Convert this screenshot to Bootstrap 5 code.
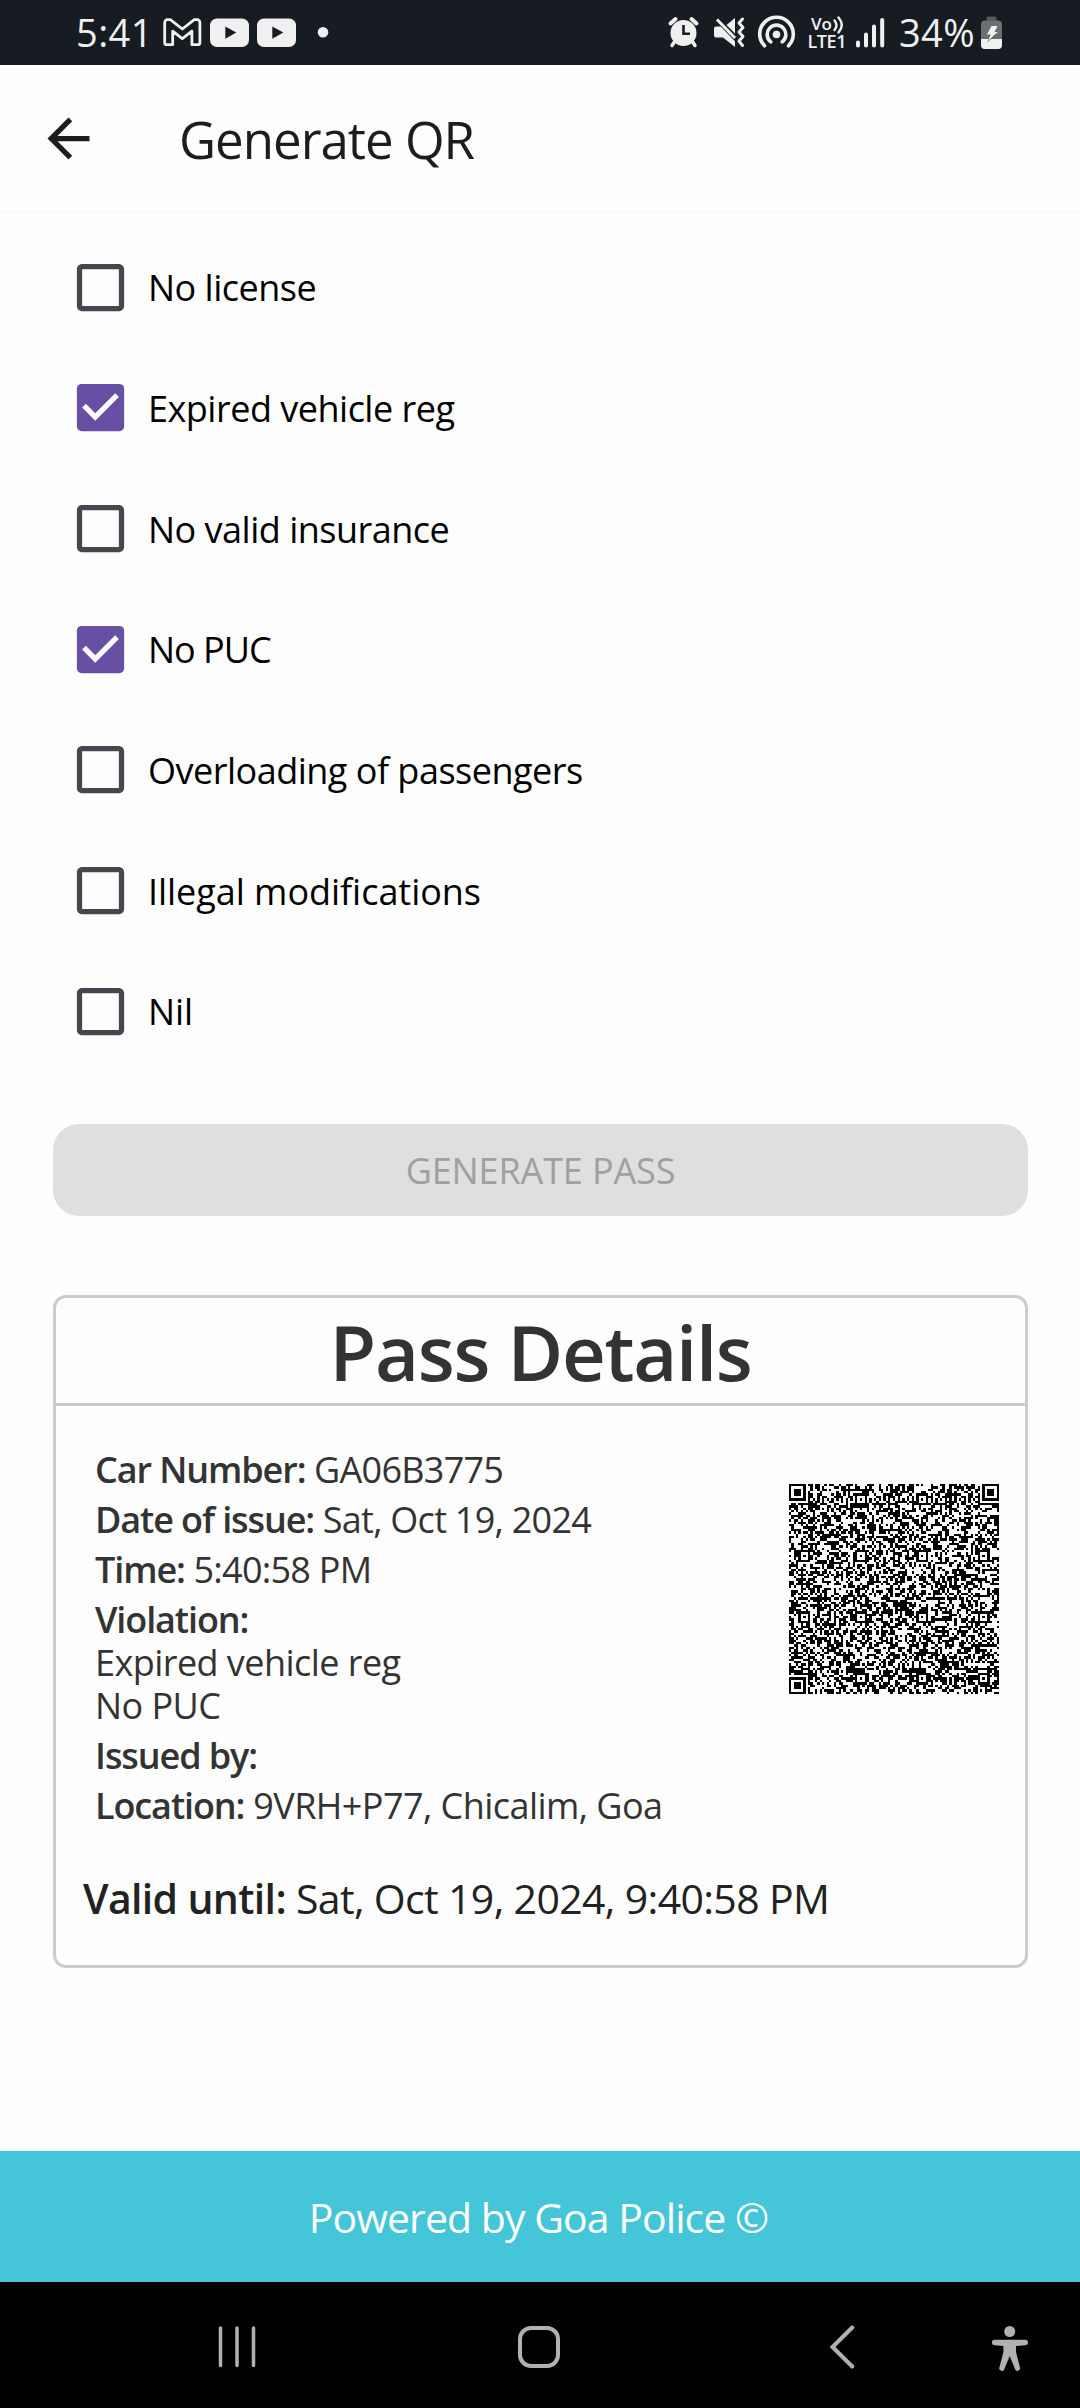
<!DOCTYPE html>
<html lang="en">
<head>
<meta charset="utf-8">
<meta name="viewport" content="width=device-width, initial-scale=1">
<title>Generate QR</title>
<link href="https://cdn.jsdelivr.net/npm/bootstrap@5.3.0/dist/css/bootstrap.min.css" rel="stylesheet">
<style>
  body { font-family: "Open Sans", "Noto Sans", sans-serif; background: #fefefe; color: #000; min-height: 2408px; }
  svg { display: block; flex: none; }
  .status-bar { height: 65px; background: #171b22; color: #f0f0f0; padding: 0 77px 0 76px; }
  .status-text { font-size: 38px; line-height: 65px; letter-spacing: .4px; }
  .status-clock { width: 70px; white-space: nowrap; }
  .status-level { margin-right: 3px; }
  .status-icons { height: 65px; }
  .app-bar { height: 148px; padding-left: 37px; border-bottom: 2px solid #fafafa; }
  .app-title { font-size: 51px; line-height: 60px; letter-spacing: -1px; color: #1d1d1f; margin: 1px 0 0 79px; font-weight: 400; }
  .checks { padding: 14px 0 0 69px; }
  .check-row { height: 120.67px; font-size: 36px; letter-spacing: -.5px; gap: 16px; }
  .check-row span { padding-top: 2px; }
  .check-row.wide { letter-spacing: -.04px; }
  .check-row.caps { letter-spacing: -1px; }
  .content-area { padding: 52px 52px 0 53px; }
  .btn-pass, .btn-pass:disabled { height: 92px; border: 0; border-radius: 26px; background: #dfdfdf; color: #a0a0a0; font-size: 36px; letter-spacing: -.13px; padding-top: 8px; opacity: 1; }
  .pass-card { margin-top: 79px; height: 673px; border: 3px solid #ccc; border-radius: 13px; background: #fefefe; color: #333; }
  .pass-head { height: 108px; border-bottom: 3px solid #ccc; background: none; padding: 0; }
  .pass-title { font-size: 76px; line-height: 107px; font-weight: 600; letter-spacing: -1.3px; margin: 0; }
  .pass-body { padding: 42px 26px 0 39px; }
  .fields { font-size: 36px; line-height: 43px; letter-spacing: -.73px; }
  .fields > div { margin-bottom: 7px; }
  .fields b, .valid b { font-weight: 600; }
  .fields b { letter-spacing: -1.1px; }
  .fields .reasons { letter-spacing: -.55px; }
  .qr { margin-top: 36px; }
  .valid { padding-left: 27px; margin-top: 36px; font-size: 41px; line-height: 56px; letter-spacing: -.65px; color: #222; }
  .powered { height: 131px; background: #44c5d8; color: #fff; font-size: 41px; letter-spacing: -.95px; padding: 2px 3px 0 0; }
  .nav-keys { height: 126px; background: #000; padding: 3px 0 0 217px; }
</style>
<script src="https://cdn.jsdelivr.net/npm/bootstrap@5.3.0/dist/js/bootstrap.bundle.min.js"></script>
</head>
<body class="d-flex flex-column">

<header class="status-bar d-flex justify-content-between">
  <div class="d-flex align-items-center">
    <span class="status-text status-clock">5:41</span>
    <svg class="status-icons" width="190" height="65" viewBox="146 0 190 65">
      <path d="M166.500 19.600h3.800l12 9.400 12-9.400h3.800q1.800 1 1.800 3v20.100q0 2-2 2h-6v-13.500l-9.600 7.400-9.600-7.400v13.500h-6q-2 0-2-2v-20.100q0-2 1.800-3z" fill="none" stroke="#f0f0f0" stroke-width="2.800" stroke-linejoin="round"/>
      <rect x="210" y="18.500" width="39" height="28.500" rx="7" fill="#f0f0f0"/><path d="M225.300 26.500v12.200l11-6.100z" fill="#171b22"/>
      <rect x="257" y="18.500" width="39" height="28.500" rx="7" fill="#f0f0f0"/><path d="M272.300 26.500v12.200l11-6.100z" fill="#171b22"/>
      <circle cx="323" cy="32.300" r="5.300" fill="#f0f0f0"/>
    </svg>
  </div>
  <div class="d-flex align-items-center">
    <svg class="status-icons" width="232" height="65" viewBox="668 0 232 65" fill="none" stroke="#f0f0f0">
      <circle cx="684.500" cy="33" r="13" fill="#f0f0f0" stroke="none"/>
      <path d="M671.500 23.500l5-4.500M697.500 23.500l-5-4.500" stroke-width="4" stroke-linecap="round"/>
      <path d="M676 41l-3 4.500M693 41l3 4.500" stroke-width="3.500" stroke-linecap="round"/>
      <path d="M684.500 25v8.800h6.500" stroke="#171b22" stroke-width="2.600"/>
      <path d="M717 26.500h6.500l12.500 12.500v8l-12-9.500h-7q-2 0-2-2v-7q0-2 2-2zM736 18v15.500l-8.500-8.500z" fill="#f0f0f0" stroke="none"/>
      <path d="M717 20l22 23" stroke="#171b22" stroke-width="2"/><path d="M718 19.500l18 18.500" stroke-width="3"/>
      <path d="M743.500 19l-3.500 4 4 4.500-4 4.500 4 4.500-4 4.500 3.500 4.500" stroke-width="3" stroke-linejoin="round" stroke-linecap="round"/>
      <circle cx="777.500" cy="34.500" r="3.800" fill="#f0f0f0" stroke="none"/>
      <path d="M771.800 41.800a9.300 9.300 0 1 1 11.400 0M765.500 45.800a16.800 16.800 0 1 1 24 0" stroke-width="3.600" stroke-linecap="round"/>
      <text x="812" y="29.500" font-size="17" font-weight="600" fill="#f0f0f0" stroke="none" textLength="21">Vo</text>
      <text x="808.500" y="47.500" font-size="18" font-weight="600" fill="#f0f0f0" stroke="none" textLength="39">LTE1</text>
      <path d="M835.500 20.500q4 4.500 0 9.500M839.500 17.500q6.500 7.500 0 15" stroke-width="2.400" stroke-linecap="round"/>
      <path d="M859 42.500v3M867 34.500v11M875 26.500v19M883.200 20v25.500" stroke-width="4" stroke-linecap="round"/>
    </svg>
    <span class="status-text status-level">34%</span>
    <svg class="status-icons" width="25" height="65" viewBox="979 0 25 65">
      <path d="M987.500 22v-4q0-1.500 1.500-1.500h7q1.500 0 1.500 1.500v4z" fill="#55585d"/>
      <rect x="982" y="20.500" width="21" height="28.500" rx="4" fill="#6c6f73"/>
      <path d="M982 39h21v6q0 4-4 4h-13q-4 0-4-4z" fill="#f0f0f0"/>
      <path d="M996.500 34h-5.500l-2.500 8 9-8z" fill="#171b22"/>
      <path d="M992.500 26h6l-3 6h3.500l-10.500 9.500 3-7h-3.500z" fill="#f0f0f0"/>
    </svg>
  </div>
</header>

<nav class="app-bar d-flex align-items-center">
  <svg width="63" height="63" viewBox="0 0 24 24" fill="#1d1d1f"><path d="M20 11H7.830l5.590-5.590L12 4l-8 8 8 8 1.410-1.410L7.830 13H20z"/></svg>
  <h1 class="app-title">Generate QR</h1>
</nav>

<svg width="0" height="0" class="position-absolute">
  <symbol id="off" viewBox="0 0 24 24"><path fill="#49454f" d="M19 5v14H5V5h14m0-2H5c-1.100 0-2 .9-2 2v14c0 1.100.9 2 2 2h14c1.100 0 2-.9 2-2V5c0-1.100-.9-2-2-2z"/></symbol>
  <symbol id="on" viewBox="0 0 24 24"><rect x="3" y="3" width="18" height="18" rx="1.800" fill="#6750a4"/><path fill="#fff" d="M10 17l-5-5 1.410-1.410L10 14.170l7.590-7.590L19 8z"/></symbol>
</svg>

<section class="checks">
  <div class="check-row d-flex align-items-center"><svg width="63" height="63"><use href="#off"/></svg><span>No license</span></div>
  <div class="check-row d-flex align-items-center"><svg width="63" height="63"><use href="#on"/></svg><span>Expired vehicle reg</span></div>
  <div class="check-row d-flex align-items-center"><svg width="63" height="63"><use href="#off"/></svg><span>No valid insurance</span></div>
  <div class="check-row caps d-flex align-items-center"><svg width="63" height="63"><use href="#on"/></svg><span>No PUC</span></div>
  <div class="check-row d-flex align-items-center"><svg width="63" height="63"><use href="#off"/></svg><span>Overloading of passengers</span></div>
  <div class="check-row wide d-flex align-items-center"><svg width="63" height="63"><use href="#off"/></svg><span>Illegal modifications</span></div>
  <div class="check-row wide d-flex align-items-center"><svg width="63" height="63"><use href="#off"/></svg><span>Nil</span></div>
</section>

<main class="content-area flex-grow-1">
  <button class="btn btn-pass w-100" disabled>GENERATE PASS</button>
  <div class="card pass-card">
    <div class="card-header pass-head text-center"><h2 class="pass-title">Pass Details</h2></div>
    <div class="pass-body d-flex justify-content-between align-items-start">
      <div class="fields">
        <div><b>Car Number:</b> GA06B3775</div>
        <div><b>Date of issue:</b> Sat, Oct 19, 2024</div>
        <div><b>Time:</b> 5:40:58 PM</div>
        <div class="reasons"><b>Violation:</b><br>Expired vehicle reg<br>No PUC</div>
        <div><b>Issued by:</b></div>
        <div class="reasons"><b>Location:</b> 9VRH+P77, Chicalim, Goa</div>
      </div>
      <svg class="qr" width="210" height="210" viewBox="0 0 89 89" shape-rendering="crispEdges"><path id="qr" fill="#000"/></svg>
    </div>
    <div class="valid"><b>Valid until:</b> Sat, Oct 19, 2024, 9:40:58 PM</div>
  </div>
</main>

<footer class="powered d-flex align-items-center justify-content-center">Powered by Goa Police ©</footer>
<div class="nav-keys">
  <svg width="820" height="120" viewBox="217 2285 820 120" fill="none" stroke="#b1b1b1">
    <path d="M220.500 2328v37.500M237 2328v37.500M253.500 2328v37.500" stroke-width="3.500" stroke-linecap="round"/>
    <rect x="520" y="2328" width="38" height="38" rx="11" stroke-width="4"/>
    <path d="M852.300 2327.500L832.500 2347l19.800 19.500" stroke-width="4" stroke-linecap="round"/>
    <g fill="#b1b1b1" stroke="none"><circle cx="1009.700" cy="2331.500" r="5.500"/>
    <path d="M994.700 2339.800h30.500a2.700 2.700 0 0 1 0 5.500l-9.200.7v6l4 15.500a2.600 2.600 0 0 1-5 1.500l-5.300-13-5.300 13a2.600 2.600 0 0 1-5-1.500l4-15.500v-6l-8.700-.7a2.700 2.700 0 0 1 0-5.500z"/></g>
  </svg>
</div>

<script>
  // Version 18 symbol: 89 modules, alignment centres at 6, 30, 56, 82
  const N = 89, centres = [6, 30, 56, 82];
  let seed = 377506;
  const rnd = () => (seed = (seed * 1103515245 + 12345) % 2147483648) / 2147483648;
  const g = Array.from({ length: N }, () => Array.from({ length: N }, () => rnd() < .5));
  for (let i = 0; i < N; i++) g[6][i] = g[i][6] = i % 2 === 0;
  const ring = (cx, cy, r, dark) => {
    for (let y = cy - r; y <= cy + r; y++) for (let x = cx - r; x <= cx + r; x++)
      if (g[y] && x >= 0 && x < N) g[y][x] = dark(Math.max(Math.abs(x - cx), Math.abs(y - cy)));
  };
  for (const x of centres) for (const y of centres) ring(x, y, 2, d => d !== 1);
  for (const [x, y] of [[3, 3], [N - 4, 3], [3, N - 4]]) ring(x, y, 4, d => d !== 2 && d !== 4);
  let d = '';
  g.forEach((row, y) => row.forEach((on, x) => { if (on) d += `M${x} ${y}h1v1h-1z`; }));
  document.getElementById('qr').setAttribute('d', d);
</script>
</body>
</html>
